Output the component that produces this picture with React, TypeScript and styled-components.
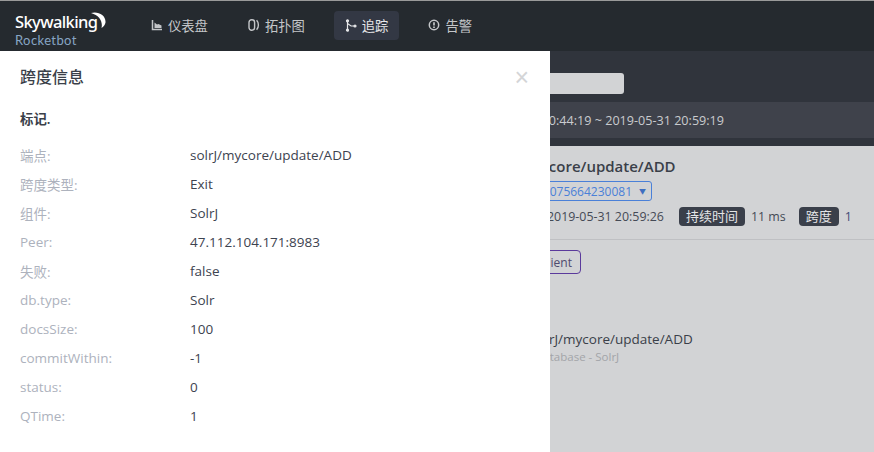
import React from "react";
import styled, { createGlobalStyle } from "styled-components";

const Global = createGlobalStyle`
  html, body { margin: 0; padding: 0; background: #d2d3d5; overflow: hidden; }
  * { box-sizing: border-box; }
  body { font-family: "Open Sans", "Noto Sans CJK SC", sans-serif; font-size: 13.5px; }
`;

const Page = styled.div`
  position: relative;
  width: 874px;
  height: 452px;
  overflow: hidden;
  background: #d2d3d5;
  border-top: 1px solid #9a9a9a;
`;
const NavBar = styled.header`
  height: 50px;
  background: #252a2f;
  display: flex;
  align-items: center;
  padding-left: 15px;
`;
const Logo = styled.div`
  width: 125px;
  height: 50px;
  position: relative;
  padding-top: 10px;
`;
const LogoName = styled.div`
  color: #fff;
  font-family: "Noto Sans", sans-serif;
  font-size: 16.5px;
  letter-spacing: -0.6px;
  line-height: 22px;
  font-weight: 500;
`;
const LogoSub = styled.div`
  color: #87a5c4;
  font-family: "Lato", sans-serif;
  font-size: 13px;
  letter-spacing: 0.4px;
  line-height: 15px;
`;
const Moon = styled.svg`
  position: absolute;
  left: 75px;
  top: 11px;
`;
const NavItem = styled.div<{ $active?: boolean }>`
  height: 29px;
  margin-bottom: 2px;
  display: flex;
  align-items: center;
  gap: 5px;
  padding: 0 11px;
  margin-right: 18px;
  border-radius: 4px;
  font-size: 13.3px;
  color: ${(p) => (p.$active ? "#e6e7e9" : "#c4c6c9")};
  background: ${(p) => (p.$active ? "#333844" : "transparent")};
`;
const Dark = styled.section`
  height: 95px;
  background: #30343c;
  padding-top: 22px;
`;
const SearchBox = styled.div`
  width: 624px;
  height: 21px;
  background: #d2d3d5;
  border-radius: 3px;
`;
const TimeBar = styled.div`
  margin-top: 8px;
  height: 36px;
  background: #3f424b;
  color: #c9cbce;
  font-size: 12.6px;
  display: flex;
  align-items: center;
  justify-content: flex-end;
  padding-right: 150px;
`;
const Content = styled.section`
  padding: 11px 0 0 500px;
  color: #3d4350;
`;
const Title = styled.div`
  margin-left: -11px;
  font-size: 15px;
  font-weight: 600;
  line-height: 19px;
  color: #3a3f49;
`;
const TraceSelect = styled.div`
  margin-top: 5px;
  width: 152px;
  height: 20px;
  border: 1px solid #4a80d8;
  border-radius: 3px;
  color: #4a80d8;
  font-size: 12px;
  display: flex;
  align-items: center;
  justify-content: flex-end;
  gap: 7px;
  padding-right: 5px;
`;
const Caret = styled.span`
  font-size: 7px;
  color: #3f6fc0;
`;
const Meta = styled.div`
  margin: 6px 0 0 47px;
  display: flex;
  align-items: center;
  height: 19px;
  font-size: 12.4px;
  color: #454a55;
`;
const Tag = styled.span<{ $gap: number }>`
  background: #3a3f4a;
  color: #e4e5e7;
  border-radius: 4px;
  height: 19px;
  line-height: 19px;
  padding: 0 7px;
  font-size: 13px;
  margin: 0 6px 0 ${(p) => p.$gap}px;
`;
const Value = styled.span<{ $blue?: boolean }>`
  color: ${(p) => (p.$blue ? "#3f4a75" : "#454a55")};
`;
const Divider = styled.div`
  height: 1px;
  background: #bfc0c3;
  margin: 13px 0 10px -500px;
`;
const ClientTag = styled.div`
  width: 81px;
  height: 24px;
  border: 1px solid #5b3a9c;
  border-radius: 4px;
  color: #4e4a6e;
  font-size: 12px;
  display: flex;
  align-items: center;
  justify-content: flex-end;
  padding-right: 8px;
`;
const RowTitle = styled.div`
  margin: 56px 0 0 31px;
  line-height: 18px;
  color: #3a3f49;
`;
const RowSub = styled.div`
  margin-left: 35px;
  font-size: 11.5px;
  line-height: 18px;
  color: #a3a5a9;
`;
const Drawer = styled.aside`
  position: absolute;
  left: 0;
  top: 50px;
  width: 550px;
  height: 401px;
  background: #fff;
  padding: 0 20px;
`;
const DrawerHead = styled.div`
  height: 50px;
  display: flex;
  align-items: center;
  justify-content: space-between;
`;
const DrawerTitle = styled.h2`
  margin: 0;
  font-size: 16px;
  font-weight: 500;
  color: #3a3f49;
`;
const Close = styled.span`
  color: #d4d5d7;
  font-size: 25px;
  line-height: 25px;
  font-family: "Liberation Sans", sans-serif;
  margin: 2px 1px 0 0;
`;
const SectionTitle = styled.h3`
  margin: 8px 0 0;
  height: 20px;
  font-size: 13.4px;
  line-height: 20px;
  font-weight: 600;
  color: #3a3f49;
`;
const InfoRow = styled.div`
  height: 29px;
  display: grid;
  grid-template-columns: 170px 1fr;
  align-items: center;
`;
const InfoList = styled.div`
  margin-top: 11px;
`;
const Label = styled.span`
  color: #adb2bd;
`;
const Val = styled.span`
  color: #3d4350;
`;

const rows: [string, string][] = [
  ["端点:", "solrJ/mycore/update/ADD"],
  ["跨度类型:", "Exit"],
  ["组件:", "SolrJ"],
  ["Peer:", "47.112.104.171:8983"],
  ["失败:", "false"],
  ["db.type:", "Solr"],
  ["docsSize:", "100"],
  ["commitWithin:", "-1"],
  ["status:", "0"],
  ["QTime:", "1"],
];

const ChartIcon = () => (
  <svg width="12" height="12" viewBox="0 0 12 12" fill="none">
    <path d="M1.5 1V10.5H11" stroke="#c4c6c9" strokeWidth="1.5" />
    <path d="M3.5 9V3.5L6 5.5L7.5 5L10.5 6.5V9Z" fill="#c4c6c9" />
  </svg>
);
const TopoIcon = () => (
  <svg width="12" height="12" viewBox="0 0 12 12" fill="none" stroke="#c4c6c9" strokeWidth="1.4">
    <rect x="1" y="0.8" width="5.6" height="10.4" rx="2.6" />
    <path d="M8.6 1.2C11 3.5 11 8.5 8.6 10.8" />
  </svg>
);
const TraceIcon = () => (
  <svg width="12" height="13" viewBox="0 0 12 13" fill="none" stroke="#e6e7e9" strokeWidth="1.2">
    <circle cx="2.5" cy="1.8" r="1" fill="#e6e7e9" />
    <circle cx="2.5" cy="11.2" r="1" fill="#e6e7e9" />
    <circle cx="10" cy="7" r="1" fill="#e6e7e9" />
    <path d="M2.5 2V11M2.5 4.5L6 7H9.5" />
  </svg>
);
const AlertIcon = () => (
  <svg width="12" height="12" viewBox="0 0 12 12" fill="none">
    <circle cx="6" cy="6" r="4.7" stroke="#c4c6c9" strokeWidth="1.5" />
    <path d="M6 3.2V6.6M6 7.6V9" stroke="#c4c6c9" strokeWidth="1.7" />
  </svg>
);

export default function App() {
  return (
    <Page>
      <Global />
      <NavBar>
        <Logo>
          <LogoName>Skywalking</LogoName>
          <LogoSub>Rocketbot</LogoSub>
          <Moon width="17" height="17" viewBox="0 0 17 17">
            <path d="M1 1C8 -1 16 3 15.5 10.5C15 13 13.5 15 11.5 16C13 9.5 9.5 3.5 1 1Z" fill="#fff" />
          </Moon>
        </Logo>
        <NavItem><ChartIcon />仪表盘</NavItem>
        <NavItem><TopoIcon />拓扑图</NavItem>
        <NavItem $active><TraceIcon />追踪</NavItem>
        <NavItem><AlertIcon />告警</NavItem>
      </NavBar>
      <Dark>
        <SearchBox />
        <TimeBar>2019-05-31 20:44:19 ~ 2019-05-31 20:59:19</TimeBar>
      </Dark>
      <Content>
        <Title>solrJ/mycore/update/ADD</Title>
        <TraceSelect>075664230081 <Caret>▼</Caret></TraceSelect>
        <Meta>
          <Value>2019-05-31 20:59:26</Value>
          <Tag $gap={15}>持续时间</Tag>
          <Value>11 ms</Value>
          <Tag $gap={13}>跨度</Tag>
          <Value $blue>1</Value>
        </Meta>
        <Divider />
        <ClientTag>SolrClient</ClientTag>
        <RowTitle>solrJ/mycore/update/ADD</RowTitle>
        <RowSub>Database - SolrJ</RowSub>
      </Content>
      <Drawer>
        <DrawerHead>
          <DrawerTitle>跨度信息</DrawerTitle>
          <Close>×</Close>
        </DrawerHead>
        <SectionTitle>标记.</SectionTitle>
        <InfoList>
          {rows.map(([k, v]) => (
            <InfoRow key={k}>
              <Label>{k}</Label>
              <Val>{v}</Val>
            </InfoRow>
          ))}
        </InfoList>
      </Drawer>
    </Page>
  );
}
